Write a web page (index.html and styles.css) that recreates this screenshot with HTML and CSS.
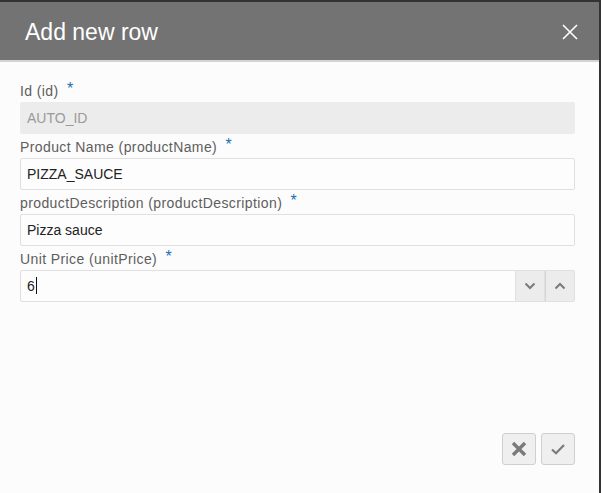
FILE: index.html
```html
<!DOCTYPE html>
<html>
<head>
<meta charset="utf-8">
<link rel="stylesheet" href="styles.css">
</head>
<body>
<div class="dialog">
  <div class="header">
    <h1 class="title">Add new row</h1>
    <button class="close" aria-label="Close">
      <svg width="16" height="16" viewBox="0 0 16 16"><path d="M1 1L15 15M15 1L1 15" stroke="#fff" stroke-width="1.6" fill="none"/></svg>
    </button>
  </div>
  <div class="body">
    <div class="field">
      <label class="label">Id (id) <span class="req">*</span></label>
      <div class="input readonly">AUTO_ID</div>
    </div>
    <div class="field">
      <label class="label">Product Name (productName) <span class="req">*</span></label>
      <div class="input">PIZZA_SAUCE</div>
    </div>
    <div class="field">
      <label class="label">productDescription (productDescription) <span class="req">*</span></label>
      <div class="input">Pizza sauce</div>
    </div>
    <div class="field">
      <label class="label">Unit Price (unitPrice) <span class="req">*</span></label>
      <div class="number">
        <div class="input num-input">6<span class="caret"></span></div>
        <button class="spin">
          <svg width="12" height="8" viewBox="0 0 12 8"><path d="M1.5 1.5L6 6L10.5 1.5" stroke="#7a7a7a" stroke-width="2" fill="none"/></svg>
        </button>
        <button class="spin">
          <svg width="12" height="8" viewBox="0 0 12 8"><path d="M1.5 6.5L6 2L10.5 6.5" stroke="#7a7a7a" stroke-width="2" fill="none"/></svg>
        </button>
      </div>
    </div>
  </div>
  <div class="footer">
    <button class="btn" aria-label="Cancel">
      <svg width="16" height="16" viewBox="0 0 16 16"><path d="M2 2L14 14M14 2L2 14" stroke="#7a7a7a" stroke-width="3.4" fill="none"/></svg>
    </button>
    <button class="btn" aria-label="Save">
      <svg width="16" height="14" viewBox="0 0 16 14"><path d="M2 7.5L6 11.2L14 3" stroke="#7a7a7a" stroke-width="2.2" fill="none"/></svg>
    </button>
  </div>
</div>
</body>
</html>
```
FILE: styles.css
```css
html, body {
  margin: 0;
  padding: 0;
  height: 100%;
  background: #fcfcfc;
  font-family: "Liberation Sans", Arial, sans-serif;
}
.dialog {
  box-sizing: border-box;
  width: 601px;
  height: 493px;
  border-top: 2px solid #333;
  border-right: 2px solid #333;
  background: #fcfcfc;
  display: flex;
  flex-direction: column;
}
.header {
  box-sizing: border-box;
  height: 60px;
  background: #737373;
  border-bottom: 2px solid #d4d4d4;
  display: flex;
  align-items: center;
  justify-content: space-between;
  padding: 2px 21px 0 25px;
}
.title {
  margin: 0;
  font-weight: normal;
  font-size: 23px;
  color: #fff;
}
.close {
  border: none;
  background: none;
  padding: 0;
  width: 16px;
  height: 16px;
  display: flex;
}
.body {
  padding: 16px 24px 0 20px;
  flex: 1;
}
.field {
  display: flex;
  flex-direction: column;
}
.label {
  height: 24px;
  line-height: 22px;
  font-size: 14px;
  letter-spacing: 0.4px;
  color: #5e5e5e;
}
.req {
  color: #1a6fb5;
  font-size: 16px;
  margin-left: 4px;
  vertical-align: 2px;
}
.input {
  box-sizing: border-box;
  height: 32px;
  border: 1px solid #e0e0e0;
  border-radius: 2px;
  background: #fdfdfd;
  padding: 0 6px;
  font-size: 14px;
  line-height: 30px;
  color: #222;
}
.readonly {
  background: #ececec;
  border-color: #ececec;
  color: #9a9a9a;
}
.number {
  display: flex;
  height: 32px;
}
.num-input {
  flex: 1;
  border-radius: 2px 0 0 2px;
}
.caret {
  display: inline-block;
  width: 1px;
  height: 17px;
  background: #111;
  vertical-align: -3px;
  margin-left: 1px;
}
.spin {
  box-sizing: border-box;
  width: 29px;
  height: 32px;
  padding: 0;
  border: 1px solid #e0e0e0;
  border-left: none;
  background: #ececec;
  display: flex;
  align-items: center;
  justify-content: center;
}
.spin:last-child {
  border-left: 1px solid #d6d6d6;
  width: 30px;
  border-radius: 0 2px 2px 0;
}
.footer {
  display: flex;
  justify-content: flex-end;
  gap: 5px;
  padding: 0 24px 28px 0;
}
.btn {
  box-sizing: border-box;
  width: 34px;
  height: 32px;
  padding: 0;
  border: 1px solid #cfcfcf;
  border-radius: 3px;
  background: #efefef;
  display: flex;
  align-items: center;
  justify-content: center;
}
```
